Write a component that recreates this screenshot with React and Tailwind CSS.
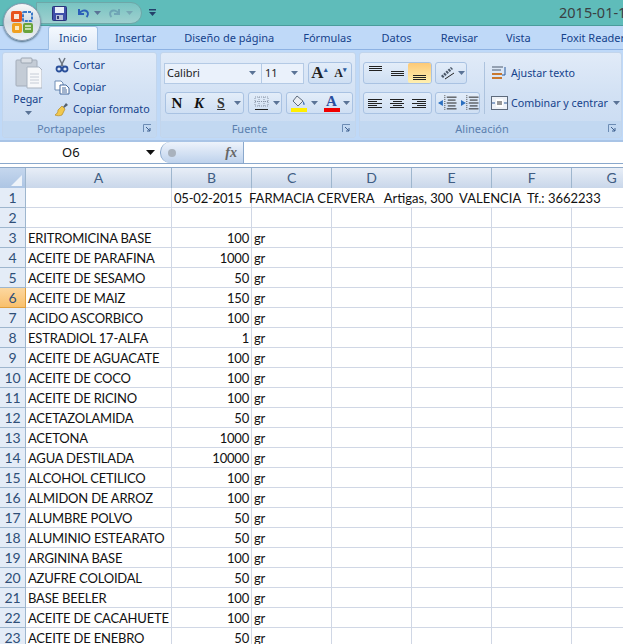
const rows = [
  ['ERITROMICINA BASE', 100],
  ['ACEITE DE PARAFINA', 1000],
  ['ACEITE DE SESAMO', 50],
  ['ACEITE DE MAIZ', 150],
  ['ACIDO ASCORBICO', 100],
  ['ESTRADIOL 17-ALFA', 1],
  ['ACEITE DE AGUACATE', 100],
  ['ACEITE DE COCO', 100],
  ['ACEITE DE RICINO', 100],
  ['ACETAZOLAMIDA', 50],
  ['ACETONA', 1000],
  ['AGUA DESTILADA', 10000],
  ['ALCOHOL CETILICO', 100],
  ['ALMIDON DE ARROZ', 100],
  ['ALUMBRE POLVO', 50],
  ['ALUMINIO ESTEARATO', 50],
  ['ARGININA BASE', 100],
  ['AZUFRE COLOIDAL', 50],
  ['BASE BEELER', 100],
  ['ACEITE DE CACAHUETE', 100],
  ['ACEITE DE ENEBRO', 50],
]

const tabs = [
  ['Insertar', 'ml-[17px]'],
  ['Diseño de página', 'ml-[28px]'],
  ['Fórmulas', 'ml-[29px]'],
  ['Datos', 'ml-[30px]'],
  ['Revisar', 'ml-[29px]'],
  ['Vista', 'ml-[28px]'],
  ['Foxit Reader', 'ml-[30px]'],
]

const gridCols = 'grid grid-cols-[26px_146px_80px_80px_80px_80px_80px_80px]'
const headCell = 'flex items-center justify-center border-r border-[#9eb6ce] bg-gradient-to-b from-[#e8eef7] to-[#c9d7ea] text-[#3f5d83]'
const rowHead = 'flex items-center justify-center border-r border-b border-[#9eb6ce] bg-[#e4ecf7] text-[14px] tracking-normal text-[#2f4f78]'
const activeHead = 'flex items-center justify-center border-r border-b border-[#e0a040] bg-gradient-to-b from-[#fcd79f] to-[#f9c06c] text-[14px] tracking-normal text-[#2f4f78]'
const cell = 'border-r border-b border-[#d0d7e5] whitespace-nowrap'

function Caret({ className = '' }) {
  return <svg width="7" height="4" viewBox="0 0 7 4" className={`shrink-0 ${className}`}><path d="M0 0h7L3.500 4z" fill="#5a7396" /></svg>
}

function OfficeButton() {
  return (
    <div className="absolute left-[3px] top-[3px] flex h-[38px] w-[38px] items-center justify-center rounded-full border border-[#8b9db1] bg-gradient-to-b from-[#f8f9fa] via-[#d3dbe2] to-[#eef2f5] shadow-[0_1px_2px_#4a6a80]">
      <svg width="24" height="24" viewBox="0 0 24 24">
        <rect x="1" y="1" width="11" height="11" rx="2" fill="#e8531d" />
        <rect x="4" y="4" width="5" height="5" fill="#f8e6d8" />
        <rect x="13" y="2" width="9" height="9" rx="1" fill="none" stroke="#3a78c8" strokeWidth="2" strokeDasharray="3 1" />
        <rect x="2" y="13" width="10" height="10" rx="2" fill="#f0a020" />
        <rect x="5" y="16" width="4" height="4" fill="#fbe9c0" />
        <rect x="13" y="13" width="10" height="10" rx="2" fill="#6aa33a" />
        <path d="M15 16h6M15 19h6" stroke="#e4f2d2" strokeWidth="1.500" />
      </svg>
    </div>
  )
}

function QuickAccess() {
  return (
    <div className="absolute left-[36px] top-[2px] flex h-[22px] w-[106px] items-center rounded-r-[11px] border border-[#6ea7a8] bg-gradient-to-b from-[#79c4c2] to-[#9ed0cf] pl-[15px]">
      <svg width="15" height="15" viewBox="0 0 15 15">
        <rect x="0.5" y="0.5" width="14" height="14" rx="1" fill="#3f4fa8" stroke="#29337a" />
        <rect x="3" y="1" width="9" height="6" fill="#e8eef8" />
        <rect x="4" y="9" width="7" height="5" fill="#b9c2d8" />
        <rect x="5" y="10" width="2" height="3" fill="#333c78" />
      </svg>
      <svg width="14" height="14" viewBox="0 0 14 14" className="ml-[9px]">
        <path d="M3 3v5h5M3.500 7.500C5 4.500 9 3.500 11 5.500c1.500 1.500 1 4-.5 5.500" fill="none" stroke="#2b5fb8" strokeWidth="2" />
      </svg>
      <Caret className="ml-[4px]" />
      <svg width="14" height="14" viewBox="0 0 14 14" className="ml-[7px] opacity-40">
        <path d="M11 3v5H6M10.500 7.500C9 4.500 5 3.500 3 5.500c-1.500 1.500-1 4 .5 5.500" fill="none" stroke="#466f9a" strokeWidth="2" />
      </svg>
      <Caret className="ml-[4px] opacity-40" />
    </div>
  )
}

function TitleBar() {
  return (
    <div className="flex h-[26px] items-center justify-end border-b border-[#4a9c9c] bg-[#5fbcba]">
      <QuickAccess />
      <svg width="7" height="8" viewBox="0 0 7 8" className="absolute left-[149px] top-[9px]">
        <path d="M0 0h7v1.500H0zM0 3h7L3.500 7z" fill="#24406a" />
      </svg>
      <span className="w-[64px] overflow-hidden whitespace-nowrap text-[14.500px] leading-none text-[#3b3f42]">2015-01-19</span>
    </div>
  )
}

function Tabs() {
  return (
    <div className="flex h-[24px] items-end border-b border-[#8db2e3] bg-[#bfd9f8] pl-[48px] text-[11px] text-[#15428b]">
      <div className="z-10 mb-[-1px] flex h-[24px] w-[50px] shrink-0 items-center justify-center rounded-t-[3px] border border-b-0 border-[#9fbfe4] bg-gradient-to-b from-[#f5f9fe] to-[#dee9f7]">Inicio</div>
      {tabs.map(([label, gap]) => (
        <span key={label} className={`${gap} h-[23px] shrink-0 whitespace-nowrap leading-[23px]`}>{label}</span>
      ))}
    </div>
  )
}

function Launcher() {
  return (
    <svg width="9" height="9" viewBox="0 0 9 9" className="absolute right-[4px] top-[3px]">
      <path d="M.5 8V.5H8" fill="none" stroke="#6c8cb4" />
      <path d="M3 3l4 4M7 4v3H4" fill="none" stroke="#3d5f8e" />
    </svg>
  )
}

function Group({ label, className, children }) {
  return (
    <div className={`${className} flex shrink-0 flex-col overflow-hidden rounded-[3px] border border-[#c2d5ec] bg-gradient-to-b from-[#e1ebf8] via-[#d2e1f4] to-[#c9dbf2]`}>
      <div className="h-[68px] shrink-0">{children}</div>
      <div className="relative flex h-[16px] items-center justify-center bg-[#c2d8f1] pr-[17px] text-[11px] text-[#5b7fae]">
        {label}
        <Launcher />
      </div>
    </div>
  )
}

function ClipboardGroup() {
  return (
    <Group label="Portapapeles" className="ml-[2px] w-[155px]">
      <div className="flex h-full text-[10.700px] text-[#15428b]">
        <div className="ml-[9px] flex w-[32px] flex-col items-center pt-[4px]">
          <svg width="28" height="32" viewBox="0 0 28 32">
            <rect x="2" y="3" width="21" height="26" rx="1" fill="#c4ccd6" stroke="#a4adba" />
            <rect x="7" y="1" width="11" height="5" rx="1" fill="#d8dde4" stroke="#9ca6b2" />
            <path d="M13 10h12l3 3v18H13z" fill="#f7f8fa" stroke="#a9b3c0" />
            <path d="M16 17h9M16 20h9M16 23h9M16 26h9" stroke="#c6ccd6" />
          </svg>
          <span className="mt-[5px] leading-none">Pegar</span>
          <Caret className="mt-[6px]" />
        </div>
        <div className="ml-[10px] flex flex-col gap-[6px] pt-[4px]">
          <div className="flex h-[16px] items-center gap-[3px]">
            <svg width="16" height="16" viewBox="0 0 16 16">
              <path d="M5 1l4 8M11 1L7 9" stroke="#6b7480" strokeWidth="1.500" />
              <circle cx="5" cy="12" r="2.500" fill="none" stroke="#2a4f9a" strokeWidth="1.800" />
              <circle cx="11" cy="12" r="2.500" fill="none" stroke="#2a4f9a" strokeWidth="1.800" />
            </svg>
            Cortar
          </div>
          <div className="flex h-[16px] items-center gap-[3px]">
            <svg width="16" height="16" viewBox="0 0 16 16">
              <path d="M1 2h6l2 2v7H1z" fill="#fff" stroke="#6f8db5" />
              <path d="M6 6h6l3 3v6H6z" fill="#fff" stroke="#44689c" />
              <path d="M8 9h4M8 11h5M8 13h5" stroke="#44689c" />
            </svg>
            Copiar
          </div>
          <div className="flex h-[16px] items-center gap-[3px] whitespace-nowrap">
            <svg width="16" height="16" viewBox="0 0 16 16">
              <path d="M9 6l3-4 2 2-4 3z" fill="#54606e" />
              <path d="M8 5l3 3-3 6c-2 1-5 1-7 0 2-1 3-3 3-5z" fill="#f1c84e" stroke="#b58a24" strokeWidth=".7" />
            </svg>
            Copiar formato
          </div>
        </div>
      </div>
    </Group>
  )
}

function ButtonGroup({ className = '', children }) {
  return <div className={`${className} flex h-[22px] shrink-0 items-center rounded-[3px] border border-[#a9c2e2] bg-gradient-to-b from-[#e3edf9] to-[#cfdff3]`}>{children}</div>
}

function Letter({ children, className }) {
  return <span className={`flex w-[22px] items-center justify-center font-['Liberation_Serif',serif] ${className}`}>{children}</span>
}

function FontGroup() {
  return (
    <Group label="Fuente" className="ml-[3px] w-[196px]">
      <div className="flex flex-col gap-[8px] pl-[3px] pt-[9px]">
        <div className="flex h-[22px] items-center">
          <div className="flex h-[21px] w-[98px] shrink-0 items-center justify-between border border-[#b4cae5] bg-[#eaf1fb] pl-[2px] pr-[5px] text-[11px] text-[#222]">
            Calibri <Caret />
          </div>
          <div className="flex h-[21px] w-[42px] shrink-0 items-center justify-between border border-l-0 border-[#b4cae5] bg-[#eaf1fb] pl-[3px] pr-[5px] text-[11px] text-[#222]">
            11 <Caret />
          </div>
          <ButtonGroup className="ml-[4px] w-[44px]">
            <Letter className="text-[17px] font-bold text-[#222]">A<sup className="text-[7px] text-[#2a5a9c]">▴</sup></Letter>
            <Letter className="text-[12px] font-bold text-[#222]">A<sup className="text-[7px] text-[#2a5a9c]">▾</sup></Letter>
          </ButtonGroup>
        </div>
        <div className="flex items-center">
          <ButtonGroup className="ml-[1px] w-[79px]">
            <Letter className="text-[15px] font-black text-[#111]">N</Letter>
            <Letter className="text-[15px] font-bold italic text-[#111]">K</Letter>
            <Letter className="text-[14px] font-bold text-[#333] underline">S</Letter>
            <Caret className="ml-[2px]" />
          </ButtonGroup>
          <ButtonGroup className="ml-[4px] w-[34px]">
            <svg width="15" height="15" viewBox="0 0 15 15" className="ml-[5px]">
              <path d="M1 1h13v9H1zM5 1v9M10 1v9M1 5.500h13" fill="none" stroke="#8a96a8" strokeDasharray="1 1" />
              <path d="M1 13.500h13" stroke="#222" strokeWidth="1.200" />
            </svg>
            <Caret className="ml-[4px]" />
          </ButtonGroup>
          <ButtonGroup className="ml-[4px] w-[67px]">
            <svg width="18" height="18" viewBox="0 0 18 18" className="ml-[3px]">
              <path d="M7 2l6 5-5 5-5-5z" fill="#e9edf3" stroke="#5d6a7c" />
              <path d="M13 7c2 2 2 4 1 4s-1-2-1-4z" fill="#3d6cb4" />
              <rect x="1" y="14" width="16" height="4" fill="#ffee00" />
            </svg>
            <Caret className="ml-[3px]" />
            <span className="ml-[5px] flex w-[17px] flex-col items-center">
              <span className="font-['Liberation_Serif',serif] text-[15px] font-bold leading-[14px] text-[#2b4f9e]">A</span>
              <span className="h-[4px] w-[16px] bg-[#f00000]" />
            </span>
            <Caret className="ml-[3px]" />
          </ButtonGroup>
        </div>
      </div>
    </Group>
  )
}

function Lines({ widths, align = 'items-center' }) {
  return (
    <span className={`flex w-[22px] flex-col ${align} gap-[1px] px-[4px]`}>
      {widths.map((w, i) => <span key={i} className={`${w} h-[1px] bg-[#222]`} />)}
    </span>
  )
}

const triple = ['w-[13px]', 'w-[13px]', 'w-[13px]']
const left = ['w-[14px]', 'w-[9px]', 'w-[14px]', 'w-[9px]', 'w-[14px]']

function Indent({ dir }) {
  return (
    <svg width="20" height="16" viewBox="0 0 20 16" className="ml-[2px]">
      <path d="M9 2h10M10 5h8M9 8h10M10 11h8M9 14h10" stroke="#222" />
      <path d="M7 0v16" stroke="#444" strokeDasharray="1 1" />
      <path d={dir === 'left' ? 'M0 8l5-3v6z' : 'M6 8L1 5v6z'} fill="#2a6fc0" />
    </svg>
  )
}

function AlignGroup() {
  return (
    <Group label="Alineación" className="ml-[3px] w-[263px]">
      <div className="flex h-full pl-[3px] pt-[9px]">
        <div className="flex w-[121px] shrink-0 flex-col gap-[8px]">
          <div className="flex">
            <ButtonGroup className="w-[69px]">
              <span className="flex h-full items-start pt-[3px]"><Lines widths={triple} /></span>
              <Lines widths={triple} />
              <span className="flex h-full w-[23px] items-end justify-center rounded-[2px] bg-gradient-to-b from-[#fcc977] to-[#fff0b0] pb-[3px]"><Lines widths={triple} /></span>
            </ButtonGroup>
            <ButtonGroup className="ml-[3px] w-[32px]">
              <svg width="16" height="14" viewBox="0 0 16 14" className="ml-[4px]">
                <path d="M2 11L12 2" stroke="#4a5768" strokeWidth="3" strokeDasharray="2 1" />
                <path d="M5 13l9-6" stroke="#222" />
              </svg>
              <Caret className="ml-[2px]" />
            </ButtonGroup>
          </div>
          <div className="flex">
            <ButtonGroup className="w-[69px]">
              <Lines widths={left} align="items-start" />
              <Lines widths={left} />
              <Lines widths={left} align="items-end" />
            </ButtonGroup>
            <ButtonGroup className="ml-[3px] w-[45px]">
              <Indent dir="left" />
              <Indent dir="right" />
            </ButtonGroup>
          </div>
        </div>
        <div className="h-[52px] w-[1px] shrink-0 bg-[#adc3de]" />
        <div className="ml-[6px] flex flex-col gap-[8px] whitespace-nowrap text-[10.700px] text-[#15428b]">
          <div className="flex h-[22px] items-center gap-[3px]">
            <svg width="17" height="15" viewBox="0 0 17 15">
              <path d="M1 1h11M1 4h9" stroke="#4c5b6e" />
              <rect x="1" y="7" width="10" height="2" fill="#c9782e" />
              <rect x="1" y="11" width="10" height="2" fill="#c9782e" />
              <path d="M14 1v8h-3" fill="none" stroke="#2a5a9c" />
            </svg>
            Ajustar texto
          </div>
          <div className="flex h-[22px] items-center gap-[3px]">
            <svg width="17" height="14" viewBox="0 0 17 14">
              <rect x=".5" y=".5" width="16" height="13" fill="#eef2f8" stroke="#5d6a7c" />
              <rect x="5" y="3" width="7" height="8" fill="#fff" />
              <path d="M6 6h5M6 8h5" stroke="#333" />
              <path d="M1 7h3M13 7h3" stroke="#2a5a9c" />
            </svg>
            Combinar y centrar
            <Caret className="ml-[2px]" />
          </div>
        </div>
      </div>
    </Group>
  )
}

function FormulaBar() {
  return (
    <div className="h-[27px] border-t-2 border-[#a9c4e6] bg-white">
      <div className="flex h-[22px] border-b border-[#8aa8cc]">
        <div className="flex w-[160px] shrink-0 items-center justify-between pl-[62px] pr-[5px] text-[13px] text-[#111]">
          O6
          <svg width="9" height="5" viewBox="0 0 9 5"><path d="M0 0h9L4.500 5z" fill="#111" /></svg>
        </div>
        <div className="flex w-[84px] shrink-0 items-center justify-between rounded-l-[10px] border-x border-[#8aa8cc] bg-gradient-to-b from-[#eef3fb] to-[#bed2ec] pl-[7px] pr-[6px]">
          <span className="h-[8px] w-[8px] rounded-full bg-[#a9b2bd]" />
          <span className="font-['Liberation_Serif',serif] text-[14px] font-bold italic leading-none text-[#666]">fx</span>
        </div>
      </div>
    </div>
  )
}

function Sheet() {
  return (
    <div className="font-['Lato',sans-serif] text-[13px] leading-[20px] tracking-[-0.2px] text-[#111]">
      <div className={`${gridCols} h-[21px] border-y border-[#8ea9c9] text-[14px]`}>
        <div className="relative border-r border-[#9eb6ce] bg-gradient-to-b from-[#c5d7ee] to-[#adc5e4]">
          <svg width="11" height="11" viewBox="0 0 11 11" className="absolute bottom-[2px] right-[3px]"><path d="M11 0v11H0z" fill="#eef3f9" /></svg>
        </div>
        {['A', 'B', 'C', 'D', 'E', 'F', 'G'].map((c) => <div key={c} className={headCell}>{c}</div>)}
      </div>
      <div className={`${gridCols} auto-rows-[20px]`}>
        <div className={rowHead}>1</div>
        <div className={cell} />
        <div className={`${cell} pl-[2px]`}>05-02-2015</div>
        <div className={`${cell} relative col-span-5 border-r-0`}>
          <span className="absolute left-[-3px] top-0 tracking-normal">FARMACIA CERVERA&nbsp;&nbsp; Artigas, 300&nbsp; VALENCIA&nbsp; Tf.: 3662233</span>
        </div>
        <div className={rowHead}>2</div>
        {[0, 1, 2, 3, 4, 5, 6].map((c) => <div key={c} className={cell} />)}
        {rows.map(([name, qty], i) => (
          <div key={name} className="contents">
            <div className={i === 3 ? activeHead : rowHead}>{i + 3}</div>
            <div className={`${cell} pl-[2px]`}>{name}</div>
            <div className={`${cell} pr-[2px] text-right`}>{qty}</div>
            <div className={`${cell} pl-[2px]`}>gr</div>
            {[0, 1, 2, 3].map((c) => <div key={c} className={cell} />)}
          </div>
        ))}
      </div>
    </div>
  )
}

export default function App() {
  return (
    <div className="relative h-[644px] w-[623px] overflow-hidden bg-white font-['Noto_Sans',sans-serif]">
      <TitleBar />
      <OfficeButton />
      <Tabs />
      <div className="flex h-[90px] items-start bg-[#bfd9f8] pt-[2px]">
        <ClipboardGroup />
        <FontGroup />
        <AlignGroup />
      </div>
      <FormulaBar />
      <Sheet />
    </div>
  )
}
